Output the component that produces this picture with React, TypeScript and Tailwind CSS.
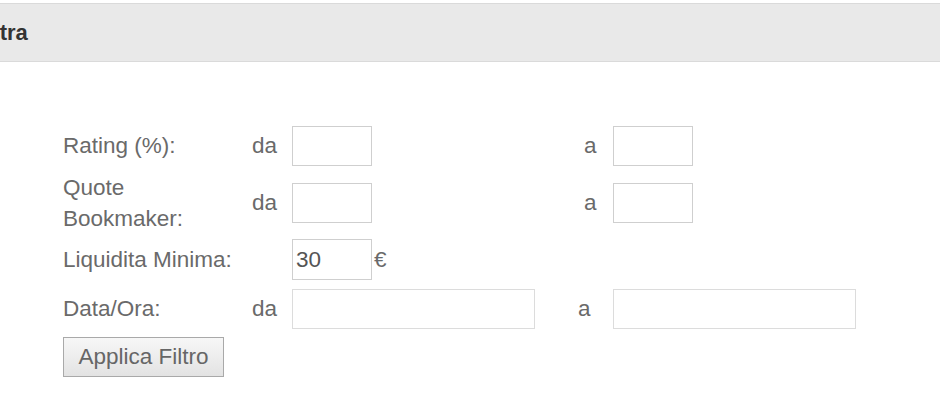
import React from "react";

const font = { fontFamily: '"Liberation Sans", Arial, Helvetica, sans-serif' };

function Box({ w, value }: { w: string; value?: string }) {
  return (
    <input
      type="text"
      defaultValue={value}
      className={`${w} h-[40px] border border-[#cfcfcf] bg-white px-[3px] text-[22.5px] text-[#555] outline-none`}
    />
  );
}

export default function App() {
  return (
    <div className="min-h-[400px] w-[940px] overflow-hidden bg-white text-[#6a6a6a]" style={font}>
      {/* Header */}
      <div className="mt-[3px] flex h-[59px] items-center overflow-hidden border-y border-[#dadada] bg-[#e9e9e9]">
        <span className="-ml-[26px] text-[22px] font-bold text-[#333]">Filtra</span>
      </div>

      {/* Form */}
      <div className="pl-[63px] pt-[64px] text-[22.5px]">
        {/* Rating */}
        <div className="flex h-[40px] items-center">
          <span className="w-[189px]">Rating (%):</span>
          <span className="w-[40px]">da</span>
          <Box w="w-[80px]" />
          <span className="ml-[212px] w-[29px]">a</span>
          <Box w="w-[80px]" />
        </div>

        {/* Quote */}
        <div className="mt-[6px] flex h-[62px] items-center">
          <span className="w-[189px] leading-[31px]">
            Quote
            <br />
            Bookmaker:
          </span>
          <span className="w-[40px]">da</span>
          <Box w="w-[80px]" />
          <span className="ml-[212px] w-[29px]">a</span>
          <Box w="w-[80px]" />
        </div>

        {/* Liquidita */}
        <div className="mt-[5px] flex h-[41px] items-center">
          <span className="w-[229px]">Liquidita Minima:</span>
          <input
            type="text"
            defaultValue="30"
            className="h-[41px] w-[80px] border border-[#cfcfcf] bg-white px-[3px] text-[22.5px] text-[#555] outline-none"
          />
          <span className="ml-[2px]">€</span>
        </div>

        {/* Data/Ora */}
        <div className="mt-[9px] flex h-[40px] items-center">
          <span className="w-[189px]">Data/Ora:</span>
          <span className="w-[40px]">da</span>
          <input
            type="text"
            className="h-[40px] w-[243px] border border-[#dcdcdc] bg-white outline-none"
          />
          <span className="ml-[43px] w-[35px]">a</span>
          <input
            type="text"
            className="h-[40px] w-[243px] border border-[#dcdcdc] bg-white outline-none"
          />
        </div>

        <button
          type="button"
          className="mt-[8px] h-[40px] w-[161px] border border-[#a9a9a9] bg-gradient-to-b from-[#f7f7f7] to-[#e3e3e3] text-[22.5px] text-[#666]"
        >
          Applica Filtro
        </button>
      </div>
    </div>
  );
}
